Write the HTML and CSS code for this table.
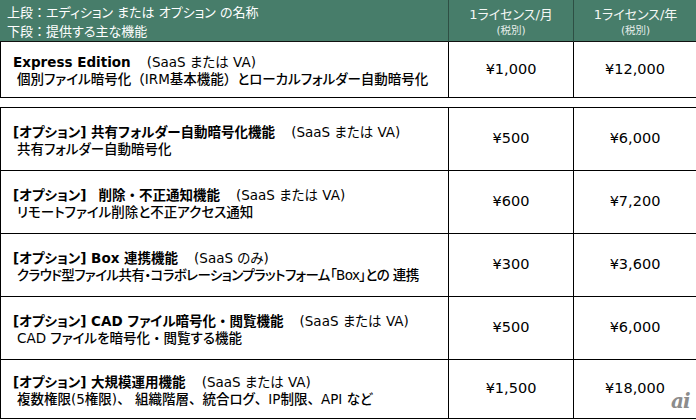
FILE: index.html
```html
<!DOCTYPE html>
<html lang="ja">
<head>
<meta charset="utf-8">
<link rel="stylesheet" href="styles.css">
</head>
<body>
<div class="page">
  <div class="grid top">
    <div class="hcell hname">
      <div>上段<span class="fw">：</span>エディション または オプション の名称</div>
      <div>下段<span class="fw">：</span>提供する主な機能</div>
    </div>
    <div class="hcell hprice"><div class="hmain">1ライセンス/月</div><div class="hsub">(税別)</div></div>
    <div class="hcell hprice last"><div class="hmain">1ライセンス/年</div><div class="hsub">(税別)</div></div>
    <div class="cell name express">
      <div class="title"><b>Express Edition</b><span class="gap"></span>(SaaS または VA)</div>
      <div class="desc">個別ファイル暗号化<span class="fw">（</span>IRM基本機能<span class="fw">）</span>とローカルフォルダー自動暗号化</div>
    </div>
    <div class="cell price express">¥1,000</div>
    <div class="cell price express last">¥12,000</div>
  </div>

  <div class="grid options">
    <div class="cell name">
      <div class="title"><b>[オプション] 共有フォルダー自動暗号化機能</b><span class="gap"></span>(SaaS または VA)</div>
      <div class="desc">共有フォルダー自動暗号化</div>
    </div>
    <div class="cell price">¥500</div>
    <div class="cell price last">¥6,000</div>

    <div class="cell name">
      <div class="title"><b>[オプション]<span class="gap small"></span>削除<span class="fw">・</span>不正通知機能</b><span class="gap"></span>(SaaS または VA)</div>
      <div class="desc">リモートファイル削除と不正アクセス通知</div>
    </div>
    <div class="cell price">¥600</div>
    <div class="cell price last">¥7,200</div>

    <div class="cell name">
      <div class="title"><b>[オプション] Box 連携機能</b><span class="gap"></span>(SaaS のみ)</div>
      <div class="desc tight">クラウド型ファイル共有・コラボレーションプラットフォーム「Box」との 連携</div>
    </div>
    <div class="cell price">¥300</div>
    <div class="cell price last">¥3,600</div>

    <div class="cell name">
      <div class="title"><b>[オプション] CAD ファイル暗号化<span class="fw">・</span>閲覧機能</b><span class="gap"></span>(SaaS または VA)</div>
      <div class="desc">CAD ファイルを暗号化<span class="fw">・</span>閲覧する機能</div>
    </div>
    <div class="cell price">¥500</div>
    <div class="cell price last">¥6,000</div>

    <div class="cell name lastrow">
      <div class="title"><b>[オプション] 大規模運用機能</b><span class="gap"></span>(SaaS または VA)</div>
      <div class="desc">複数権限(5権限)<span class="fw">、</span> 組織階層<span class="fw">、</span>統合ログ<span class="fw">、</span>IP制限<span class="fw">、</span>API など</div>
    </div>
    <div class="cell price lastrow">¥1,500</div>
    <div class="cell price last lastrow">¥18,000</div>
  </div>
  <div class="logo">ai</div>
</div>
</body>
</html>
```

FILE: styles.css
```css
html, body {
  margin: 0;
  padding: 0;
  background: #fff;
}
body {
  font-family: "DejaVu Sans", "Noto Sans CJK JP", sans-serif;
  font-feature-settings: "palt";
  color: #000;
  width: 696px;
  height: 420px;
  overflow: hidden;
}
.fw {
  font-feature-settings: normal;
}
.page {
  position: relative;
  width: 696px;
  height: 420px;
}
.grid {
  display: grid;
  grid-template-columns: 447px 125px 123px;
  width: 695px;
}
.top {
  border-left: 1px solid #000;
  border-right: 1px solid #000;
  border-bottom: 1px solid #000;
}
.hcell {
  background: #477d6a;
  color: #fff;
  border-bottom: 1px solid #111;
  box-sizing: content-box;
}
.hname {
  margin-left: -1px;
  padding-left: 7px;
  font-size: 13px;
  line-height: 19px;
  padding-top: 3px;
  height: 38px;
}
.hprice {
  border-left: 1px solid #2e4f44;
  display: flex;
  flex-direction: column;
  align-items: center;
  padding-top: 6px;
  height: 35px;
}
.hprice.last {
  margin-right: -1px;
}
.hmain {
  font-size: 13px;
  line-height: 17px;
  color: #f4f7f5;
}
.hsub {
  font-size: 10.5px;
  line-height: 14px;
  color: #e6eeea;
}
.cell {
  height: 55px;
  box-sizing: border-box;
}
.options {
  margin-top: 9px;
  border: 1px solid #000;
}
.options .cell {
  height: 63px;
  border-bottom: 1px solid #000;
}
.options .cell.lastrow {
  border-bottom: none;
  height: 58px;
}
.name {
  padding-left: 12px;
  display: flex;
  flex-direction: column;
  justify-content: center;
  padding-top: 2px;
}
.title {
  font-size: 13.5px;
  line-height: 18px;
  white-space: nowrap;
}
.title b {
  font-weight: bold;
}
.gap {
  display: inline-block;
  width: 16px;
}
.gap.small {
  width: 12px;
}
.desc {
  font-size: 13.5px;
  font-weight: 500;
  line-height: 17px;
  padding-left: 4px;
  white-space: nowrap;
}
.desc.tight {
  letter-spacing: -0.6px;
}
.price {
  border-left: 1px solid #000;
  display: flex;
  align-items: center;
  justify-content: center;
  font-size: 14.5px;
  padding-bottom: 2px;
}
.logo {
  position: absolute;
  left: 671px;
  top: 389px;
  font-family: "DejaVu Serif", serif;
  font-style: italic;
  font-weight: bold;
  font-size: 20px;
  color: #8c8c8c;
  letter-spacing: -1px;
}
```
